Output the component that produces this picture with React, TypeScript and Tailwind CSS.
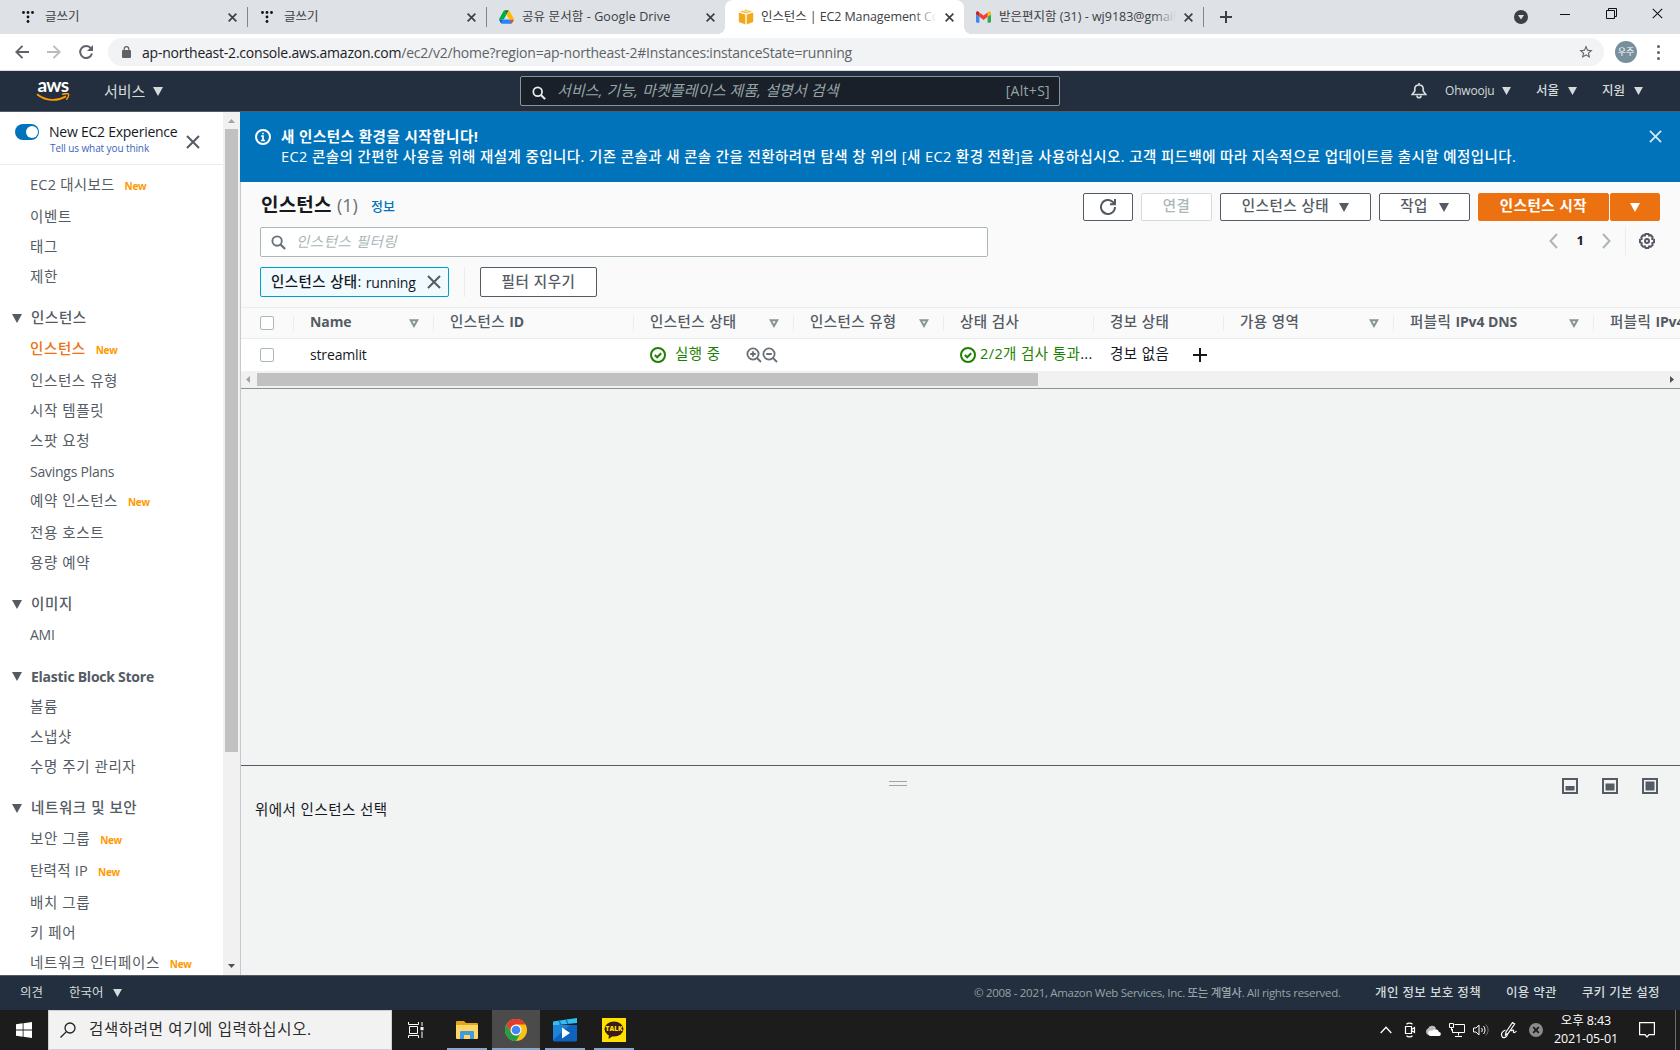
import React from 'react';

const Caret = ({ className = '' }: { className?: string }) => (
  <svg viewBox="0 0 10 9" className={'shrink-0 ' + className} fill="currentColor">
    <path d="M0 0h10L5 9z" />
  </svg>
);

const Cross = ({ className = '', w = 2 }: { className?: string; w?: number }) => (
  <svg viewBox="0 0 14 14" className={'shrink-0 ' + className} fill="none" stroke="currentColor" strokeWidth={w}>
    <path d="M1 1l12 12M13 1L1 13" />
  </svg>
);

const SearchIcon = ({ className = '' }: { className?: string }) => (
  <svg viewBox="0 0 16 16" className={'shrink-0 ' + className} fill="none" stroke="currentColor" strokeWidth="2">
    <circle cx="6.5" cy="6.5" r="5" />
    <path d="M10.2 10.2L15 15" strokeWidth="2.4" />
  </svg>
);

/* ---------- Browser chrome ---------- */

const TistoryIcon = () => (
  <svg viewBox="0 0 12 12" className="h-3 w-3 shrink-0" fill="#111">
    <circle cx="1.5" cy="1.5" r="1.4" />
    <circle cx="6" cy="1.5" r="1.4" />
    <circle cx="10.5" cy="1.5" r="1.4" />
    <circle cx="6" cy="6" r="1.4" />
    <circle cx="6" cy="10.5" r="1.4" />
  </svg>
);

const DriveIcon = () => (
  <svg viewBox="0 0 87.3 78" className="h-[14px] w-[15px] shrink-0">
    <path fill="#0066da" d="m6.6 66.85 3.85 6.65c.8 1.4 1.95 2.5 3.3 3.3l13.75-23.8h-27.5c0 1.55.4 3.1 1.2 4.5z" />
    <path fill="#00ac47" d="m43.65 25-13.75-23.8c-1.35.8-2.5 1.9-3.3 3.3l-25.4 44a9.06 9.06 0 0 0 -1.2 4.5h27.5z" />
    <path fill="#ea4335" d="m73.55 76.8c1.35-.8 2.5-1.9 3.3-3.3l1.6-2.75 7.65-13.25c.8-1.4 1.2-2.95 1.2-4.5h-27.5l5.85 11.5z" />
    <path fill="#00832d" d="m43.65 25 13.75-23.8c-1.35-.8-2.9-1.2-4.5-1.2h-18.5c-1.6 0-3.15.45-4.5 1.2z" />
    <path fill="#2684fc" d="m59.8 53h-32.3l-13.75 23.8c1.35.8 2.9 1.2 4.5 1.2h50.8c1.6 0 3.15-.45 4.5-1.2z" />
    <path fill="#ffba00" d="m73.4 26.5-12.7-22c-.8-1.4-1.95-2.5-3.3-3.3l-13.75 23.8 16.15 28h27.45c0-1.55-.4-3.1-1.2-4.5z" />
  </svg>
);

const CubeIcon = () => (
  <svg viewBox="0 0 16 16" className="h-4 w-4 shrink-0">
    <path fill="#f8bc3c" d="M8 .5l6 2-6 2-6-2z" />
    <path fill="#f2a81d" d="M.8 3.4L7.5 5.4V15.5L.8 13z" />
    <path fill="#f2a81d" d="M15.2 3.4L8.5 5.4V15.5l6.7-2.5z" />
    <path stroke="#fff4dc" strokeWidth=".9" fill="none" d="M8 5v10.5M1 3l7 2.2L15 3M5 1.5l3.2 1 3-1" />
  </svg>
);

const GmailIcon = () => (
  <svg viewBox="52 42 88 66" className="h-[12px] w-[15px] shrink-0">
    <path fill="#4285f4" d="M58 108h14V74L52 59v43c0 3.32 2.69 6 6 6" />
    <path fill="#34a853" d="M120 108h14c3.32 0 6-2.69 6-6V59l-20 15" />
    <path fill="#fbbc04" d="M120 48v26l20-15v-8c0-7.42-8.47-11.65-14.4-7.2" />
    <path fill="#ea4335" d="M72 74V48l24 18 24-18v26L96 92" />
    <path fill="#c5221f" d="M52 51v8l20 15V48l-5.6-4.2c-5.94-4.45-14.4-.22-14.4 7.2" />
  </svg>
);

type TabProps = {
  icon: React.ReactNode;
  title: string;
  width: string;
  text?: string;
  active?: boolean;
  sep?: boolean;
  fade?: boolean;
};

const Tab = ({ icon, title, width, text = '', active, sep, fade }: TabProps) => (
  <div className={'relative flex h-full items-center ' + width + (active ? ' rounded-t-lg bg-white' : '')}>
    <span className="flex w-[23px] shrink-0 items-center">{icon}</span>
    <span className={'relative min-w-0 flex-1 overflow-hidden whitespace-nowrap text-[12.5px] text-[#3c4043] ' + text}>
      {title}
      {fade && (
        <span
          className={
            'absolute inset-y-0 right-0 w-6 bg-gradient-to-r from-transparent ' + (active ? 'to-white' : 'to-[#dee1e6]')
          }
        />
      )}
    </span>
    <Cross className="mr-[10px] ml-2 h-[9px] w-[9px] text-[#3c4043]" w={2.6} />
    {sep && <span className="h-5 w-px bg-[#80868b]" />}
    {active && (
      <>
        <span className="absolute bottom-0 -left-2 h-2 w-2 bg-[radial-gradient(circle_at_0_0,transparent_8px,white_8px)]" />
        <span className="absolute -right-2 bottom-0 h-2 w-2 bg-[radial-gradient(circle_at_100%_0,transparent_8px,white_8px)]" />
      </>
    )}
  </div>
);

const TabStrip = () => (
  <div className="flex h-[34px] bg-[#dee1e6]">
    <Tab icon={<TistoryIcon />} title="글쓰기" width="w-[248px] pl-[22px]" sep />
    <Tab icon={<TistoryIcon />} title="글쓰기" width="w-[239px] pl-[13px]" sep />
    <Tab icon={<DriveIcon />} title="공유 문서함 - Google Drive" width="w-[238px] pl-[12px]" text="tracking-[0.1px]" />
    <Tab
      icon={<CubeIcon />}
      title="인스턴스 | EC2 Management Console"
      width="w-[239px] pl-[13px]"
      text="tracking-[-0.1px]"
      active
      fade
    />
    <Tab icon={<GmailIcon />} title="받은편지함 (31) - wj9183@gmail.com" width="w-[240px] pl-[12px]" sep fade />
    <div className="flex flex-1 items-center pl-[16px]">
      <svg viewBox="0 0 12 12" className="h-3 w-3" stroke="#3c4043" strokeWidth="2">
        <path d="M6 0v12M0 6h12" />
      </svg>
      <svg viewBox="0 0 14 14" className="ml-auto h-[14px] w-[14px]">
        <circle cx="7" cy="7" r="7" fill="#3c4043" />
        <path d="M4 5h6L7 9.5z" fill="#dee1e6" />
      </svg>
      <svg viewBox="0 0 10 10" className="mb-[6px] ml-[32px] h-[10px] w-[10px]" stroke="#111">
        <path d="M0 5.5h10" />
      </svg>
      <svg viewBox="0 0 11 11" className="mb-[7px] ml-[36px] h-[11px] w-[11px]" stroke="#111" fill="none">
        <path d="M.5 2.5h8v8h-8zM2.5 2.5v-2h8v8h-2" />
      </svg>
      <Cross className="mr-[17px] mb-[7px] ml-[35px] h-[11px] w-[11px] text-[#111]" w={1.3} />
    </div>
  </div>
);

const Toolbar = () => (
  <div className="flex h-[37px] items-center border-b border-[#dadce0] bg-white pl-[15px]">
    <svg viewBox="0 0 14 14" className="h-[14px] w-[14px]" fill="none" stroke="#5f6368" strokeWidth="1.9">
      <path d="M14 7H1.5M7.5 .8L1.3 7l6.2 6.2" />
    </svg>
    <svg viewBox="0 0 14 14" className="ml-[18px] h-[14px] w-[14px]" fill="none" stroke="#b9bbbe" strokeWidth="1.9">
      <path d="M0 7h12.5M6.5 .8L12.7 7l-6.2 6.2" />
    </svg>
    <svg viewBox="0 0 14 14" className="ml-[18px] h-[14px] w-[14px]" fill="none" stroke="#5f6368" strokeWidth="2">
      <path d="M12 3.4A6 6 0 1 0 13 8.6" />
      <path d="M14 0v6H8z" fill="#5f6368" stroke="none" />
    </svg>
    <div className="ml-[15px] flex h-7 w-[1496px] items-center rounded-full bg-[#f1f3f4] pl-[14px]">
      <svg viewBox="0 0 9 12" className="h-3 w-[9px]" fill="#5f6368">
        <path d="M1 4h7a1 1 0 0 1 1 1v6a1 1 0 0 1-1 1H1a1 1 0 0 1-1-1V5a1 1 0 0 1 1-1z" />
        <path d="M2.2 5V3a2.3 2.3 0 0 1 4.6 0v2" fill="none" stroke="#5f6368" strokeWidth="1.2" />
      </svg>
      <span className="ml-[11px] text-[14px] tracking-[-0.22px] whitespace-nowrap text-[#5f6368]">
        <span className="text-[#202124]">ap-northeast-2.console.aws.amazon.com</span>
        /ec2/v2/home?region=ap-northeast-2#Instances:instanceState=running
      </span>
      <svg viewBox="0 0 24 24" className="mr-[10px] ml-auto h-4 w-4" fill="#5f6368">
        <path d="M22 9.24l-7.19-.62L12 2 9.19 8.63 2 9.24l5.46 4.73L5.82 21 12 17.27 18.18 21l-1.63-7.03L22 9.24zM12 15.4l-3.76 2.27 1-4.28-3.32-2.88 4.38-.38L12 6.1l1.71 4.04 4.38.38-3.32 2.88 1 4.28L12 15.4z" />
      </svg>
    </div>
    <span className="ml-[11px] flex h-[22px] w-[22px] items-center justify-center rounded-full bg-[#78909c] text-[9px] text-white">
      우주
    </span>
    <span className="ml-5 flex flex-col gap-[3px]">
      <span className="h-[3px] w-[3px] rounded-full bg-[#5f6368]" />
      <span className="h-[3px] w-[3px] rounded-full bg-[#5f6368]" />
      <span className="h-[3px] w-[3px] rounded-full bg-[#5f6368]" />
    </span>
  </div>
);

/* ---------- AWS console header ---------- */

const AwsLogo = () => (
  <div className="relative h-[24px] w-[34px]">
    <span className="block text-center font-[Lato] text-[19px] leading-[11px] font-bold tracking-[-0.6px] text-white">aws</span>
    <svg viewBox="0 0 34 9" className="absolute top-[14px] left-0 h-[9px] w-[34px]" fill="none" stroke="#ff9900">
      <path d="M1 1.2C10 8.2 21 8.6 30 3.4" strokeWidth="1.8" />
      <path d="M26 1.4c3-1 6-.8 6.4-.2.4.7-.4 3.4-2 5.6" strokeWidth="1.5" />
    </svg>
  </div>
);

const AwsNav = () => (
  <header className="flex h-[41px] items-center border-b border-[#545b64] bg-[#232f3e] pl-[36px] text-[#d5dbdb]">
    <AwsLogo />
    <span className="ml-[34px] w-[49px] text-[15px] leading-[20px] whitespace-nowrap">서비스</span>
    <Caret className="h-[9px] w-[10px]" />
    <div className="ml-[357px] flex h-[30px] w-[540px] items-center rounded-[2px] border border-[#879596] bg-[#1a2029] pr-[9px] pl-[11px]">
      <SearchIcon className="mt-[3px] h-[14px] w-[14px] text-[#eaeded]" />
      <span className="mb-px ml-[11px] text-[15px] tracking-[0.1px] whitespace-nowrap text-[#95a5a6] italic">
        서비스, 기능, 마켓플레이스 제품, 설명서 검색
      </span>
      <span className="mb-px ml-auto text-[14px] tracking-[0.3px] text-[#95a5a6]">[Alt+S]</span>
    </div>
    <svg viewBox="0 0 16 16" className="ml-[351px] h-4 w-4" fill="none" stroke="currentColor" strokeWidth="1.7">
      <path d="M1.2 11.5h13.6L12.2 8V5.5C12 3 10.500 2 8 2S4 3 3.800 5.500V8zM8 0v2" />
      <path d="M6 12.500c0 3 4 3 4 0" />
    </svg>
    <span className="ml-[18px] w-[57px] text-[12px] font-medium tracking-[-0.2px]">Ohwooju</span>
    <Caret className="h-2 w-[9px]" />
    <span className="ml-[25px] w-[32px] text-[12.500px] font-medium whitespace-nowrap">서울</span>
    <Caret className="h-2 w-[9px]" />
    <span className="ml-[25px] w-[32px] text-[12.500px] font-medium whitespace-nowrap">지원</span>
    <Caret className="h-2 w-[9px]" />
  </header>
);

/* ---------- Sidebar ---------- */

type NavRow = { label: string; h: string; fresh?: boolean; head?: boolean; active?: boolean; latin?: boolean; mixed?: boolean };

const NAV: NavRow[] = [
  { label: 'EC2 대시보드', h: 'h-[30px]', fresh: true, mixed: true },
  { label: '이벤트', h: 'h-[32px]' },
  { label: '태그', h: 'h-[30px]' },
  { label: '제한', h: 'h-[30px]' },
  { label: '인스턴스', h: 'h-[41px]', head: true },
  { label: '인스턴스', h: 'h-[31px]', active: true, fresh: true },
  { label: '인스턴스 유형', h: 'h-[32px]' },
  { label: '시작 템플릿', h: 'h-[30px]' },
  { label: '스팟 요청', h: 'h-[30px]' },
  { label: 'Savings Plans', h: 'h-[30px]', latin: true },
  { label: '예약 인스턴스', h: 'h-[30px]', fresh: true },
  { label: '전용 호스트', h: 'h-[32px]' },
  { label: '용량 예약', h: 'h-[30px]' },
  { label: '이미지', h: 'h-[41px]', head: true },
  { label: 'AMI', h: 'h-[30px]', latin: true },
  { label: 'Elastic Block Store', h: 'h-[42px]', head: true, latin: true },
  { label: '볼륨', h: 'h-[31px]' },
  { label: '스냅샷', h: 'h-[30px]' },
  { label: '수명 주기 관리자', h: 'h-[30px]' },
  { label: '네트워크 및 보안', h: 'h-[41px]', head: true },
  { label: '보안 그룹', h: 'h-[31px]', fresh: true },
  { label: '탄력적 IP', h: 'h-[32px]', fresh: true, mixed: true },
  { label: '배치 그룹', h: 'h-[32px]' },
  { label: '키 페어', h: 'h-[30px]' },
  { label: '네트워크 인터페이스', h: 'h-[30px]', fresh: true },
];

const Sidebar = () => (
  <aside className="flex w-[240px] shrink-0 bg-white">
    <div className="w-[223px]">
      <div className="flex h-[53px] border-b border-[#eaeded] pl-[15px]">
        <span className="mt-3 flex h-4 w-6 justify-end rounded-full bg-[#0073bb] p-[2px] pr-[1px]">
          <span className="h-3 w-3 rounded-full bg-white" />
        </span>
        <div className="ml-[10px] flex w-[137px] flex-col pt-[11px] whitespace-nowrap">
          <span className="text-[14px] leading-[18px] tracking-[-0.25px] text-[#16191f]">New EC2 Experience</span>
          <span className="mt-[1px] pl-px text-[10px] leading-[13px] tracking-[-0.1px] text-[#3b5fc0]">Tell us what you think</span>
        </div>
        <Cross className="mt-[23px] h-[14px] w-[14px] text-[#545b64]" />
      </div>
      <nav>
        {NAV.map((r, i) => (
          <div key={i} className={'flex items-end whitespace-nowrap ' + r.h + (r.head ? ' pl-[12px]' : ' pl-[30px]')}>
            <div className="flex h-5 items-center">
              {r.head && <Caret className="mr-[9px] h-[9px] w-[10px] text-[#545b64]" />}
              <span
                className={
                  (r.latin
                    ? 'text-[14px] tracking-[-0.25px] '
                    : r.mixed
                      ? 'text-[14.500px] tracking-[0.25px] '
                      : 'text-[14.500px] tracking-[0.6px] ') +
                  (r.active
                    ? 'font-medium text-[#ec7211]'
                    : r.head && r.latin
                      ? 'font-bold text-[#545b64]'
                      : r.head
                        ? 'font-medium text-[#545b64]'
                        : 'text-[#545b64]')
                }
              >
                {r.label}
              </span>
              {r.fresh && <span className="mt-[3px] ml-[10px] text-[10px] font-bold tracking-[-0.3px] text-[#ff9900]">New</span>}
            </div>
          </div>
        ))}
      </nav>
    </div>
    <div className="flex w-[17px] flex-col items-center bg-[#f1f1f1]">
      <svg viewBox="0 0 7 4" className="mt-[7px] mb-[6px] h-1 w-[7px]" fill="#a3a3a3">
        <path d="M3.500 0L7 4H0z" />
      </svg>
      <div className="h-[623px] w-[13px] bg-[#c1c1c1]" />
      <svg viewBox="0 0 7 4" className="mt-auto mb-[7px] h-1 w-[7px]" fill="#505050">
        <path d="M0 0h7L3.500 4z" />
      </svg>
    </div>
  </aside>
);

/* ---------- Main panel ---------- */

const Banner = () => (
  <div className="flex h-[70px] bg-[#0073bb] pl-[15px] text-white">
    <svg viewBox="0 0 16 16" className="mt-[17px] h-4 w-4 shrink-0" fill="none" stroke="currentColor" strokeWidth="2">
      <circle cx="8" cy="8" r="7" />
      <path d="M6.200 7.200H8v4M6 11.500h4M7.200 4.500h1.600" strokeWidth="1.700" />
    </svg>
    <div className="ml-[10px] flex-1 pt-[15px] text-[14.500px] leading-5 font-medium tracking-[0.42px] whitespace-nowrap">
      <div className="font-bold tracking-[0.5px]">새 인스턴스 환경을 시작합니다!</div>
      <div>
        EC2 콘솔의 간편한 사용을 위해 재설계 중입니다. 기존 콘솔과 새 콘솔 간을 전환하려면 탐색 창 위의 [새 EC2 환경 전환]을
        사용하십시오. 고객 피드백에 따라 지속적으로 업데이트를 출시할 예정입니다.
      </div>
    </div>
    <Cross className="mt-[18px] mr-[18px] h-[13px] w-[13px] text-[#d5e6f2]" />
  </div>
);

const BTN =
  'flex h-7 items-center justify-center rounded-[2px] border pb-[2px] whitespace-nowrap text-[14.500px] font-medium tracking-[0.5px] ';

const PanelHeader = () => (
  <div className="flex h-[126px] flex-col border-b border-[#eaeded] bg-[#fafafa] pt-[11px] pr-5 pl-[19px]">
    <div className="flex h-[28px] items-center">
      <span className="w-[77px] pb-[4px] pl-px text-[19px] font-bold tracking-[0.2px] whitespace-nowrap text-[#16191f]">
        인스턴스
      </span>
      <span className="w-[34px] pb-[4px] text-[18px] text-[#687078]">(1)</span>
      <span className="text-[13px] font-medium text-[#0073bb]">정보</span>
      <div className="ml-auto flex gap-2">
        <span className={BTN + 'w-[50px] border-[#545b64] bg-white text-[#545b64]'}>
          <svg viewBox="0 0 16 16" className="mt-[2px] h-4 w-4" fill="none" stroke="currentColor" strokeWidth="2">
            <path d="M15 8a7 7 0 1 1-2.200-5.100L15 5M15 0v5.200h-5" />
          </svg>
        </span>
        <span className={BTN + 'w-[71px] border-[#d5dbdb] bg-white text-[#aab7b8]'}>연결</span>
        <span className={BTN + 'w-[151px] gap-[10px] border-[#545b64] bg-white text-[#545b64]'}>
          인스턴스 상태
          <Caret className="mt-[2px] h-[9px] w-[10px]" />
        </span>
        <span className={BTN + 'w-[91px] gap-[11px] border-[#545b64] bg-white text-[#545b64]'}>
          작업
          <Caret className="mt-[2px] h-[9px] w-[10px]" />
        </span>
        <div className="flex gap-px">
          <span className={BTN + 'w-[131px] border-[#ec7211] bg-[#ec7211] text-white'}>
            <b>인스턴스 시작</b>
          </span>
          <span className={BTN + 'w-[50px] border-[#ec7211] bg-[#ec7211] text-white'}>
            <Caret className="mt-[2px] h-[9px] w-[10px]" />
          </span>
        </div>
      </div>
    </div>
    <div className="mt-[6px] flex h-[30px]">
      <div className="flex w-[728px] items-center rounded-[2px] border border-[#aab7b8] bg-white pl-[10px]">
        <SearchIcon className="h-[15px] w-[15px] text-[#687078]" />
        <span className="mb-px ml-[10px] text-[14.500px] tracking-[0.5px] text-[#aab7b8] italic">인스턴스 필터링</span>
      </div>
      <div className="ml-auto flex h-7 items-center">
        <svg viewBox="0 0 9 16" className="h-4 w-[9px]" fill="none" stroke="#aab7b8" strokeWidth="2">
          <path d="M8 1L1.500 8 8 15" />
        </svg>
        <span className="mr-[18px] ml-[19px] text-[13px] font-bold text-[#16191f]">1</span>
        <svg viewBox="0 0 9 16" className="h-4 w-[9px]" fill="none" stroke="#aab7b8" strokeWidth="2">
          <path d="M1 1l6.500 7L1 15" />
        </svg>
        <span className="mr-[13px] ml-[14px] h-7 w-px bg-[#eaeded]" />
        <svg viewBox="0 0 16 16" className="mr-[5px] h-4 w-4" fill="none" stroke="#545b64" strokeWidth="2">
          <path d="M6.500 1h3l.6 1.500 1.700-.3 1.800 1.900-.4 1.700L15 6.600v2.800l-1.700.8.3 1.700-1.800 1.800-1.700-.3-.8 1.600H6.700l-.8-1.600-1.700.3-1.800-1.800.3-1.700L1 9.400V6.600l1.700-.8-.3-1.700 1.800-1.900 1.700.3z" />
          <circle cx="8" cy="8" r="2" />
        </svg>
      </div>
    </div>
    <div className="mt-[10px] flex h-[30px]">
      <div className="flex w-[189px] items-center rounded-[2px] border border-[#00a1c9] bg-[#f1faff] pl-[10px] whitespace-nowrap text-[#16191f]">
        <span className="text-[14.500px] font-medium tracking-[0.4px]">인스턴스 상태:</span>
        <span className="ml-1 text-[14px] tracking-[-0.2px]">running</span>
        <Cross className="mr-[7px] ml-auto h-[14px] w-[14px] text-[#545b64]" />
      </div>
      <span className="mr-[15px] ml-[15px] w-px bg-[#eaeded]" />
      <span
        className={
          'flex h-[30px] w-[117px] items-center justify-center rounded-[2px] border border-[#545b64] bg-white pb-px text-[14.500px] font-medium tracking-[0.6px] text-[#545b64]'
        }
      >
        필터 지우기
      </span>
    </div>
  </div>
);

const COLS: { label: string; w: string; sort?: boolean; latin?: string; tail?: string }[] = [
  { label: '', latin: 'Name', w: 'w-[140px]', sort: true },
  { label: '인스턴스 ', latin: 'ID', w: 'w-[200px]' },
  { label: '인스턴스 상태', w: 'w-[160px]', sort: true },
  { label: '인스턴스 유형', w: 'w-[150px]', sort: true },
  { label: '상태 검사', w: 'w-[150px]' },
  { label: '경보 상태', w: 'w-[130px]' },
  { label: '가용 영역', w: 'w-[170px]', sort: true },
  { label: '퍼블릭 ', latin: 'IPv4 DNS', w: 'w-[200px]', sort: true },
  { label: '퍼블릭 ', latin: 'IPv4', tail: ' 주소', w: 'w-[200px]' },
];

const OkIcon = () => (
  <svg viewBox="0 0 16 16" className="h-4 w-4 shrink-0" fill="none" stroke="#1d8102" strokeWidth="2">
    <circle cx="8" cy="8" r="7" />
    <path d="M4.800 8l2.400 2.300 4-4" />
  </svg>
);

const Magnifier = ({ plus }: { plus?: boolean }) => (
  <svg viewBox="0 0 16 16" className="h-4 w-4 shrink-0" fill="none" stroke="#687078" strokeWidth="1.800">
    <circle cx="7" cy="7" r="5.600" />
    <path d="M11 11l4 4M4.200 7h5.600" />
    {plus && <path d="M7 4.200v5.600" />}
  </svg>
);

const Checkbox = () => <span className="ml-[19px] h-[14px] w-[14px] rounded-[2px] border border-[#aab7b8] bg-white" />;

const Table = () => (
  <div className="border-b border-[#879596] bg-white">
    <div className="flex h-[31px] items-center overflow-hidden border-b border-[#eaeded] bg-[#fafafa]">
      <div className="flex w-[52px] shrink-0">
        <Checkbox />
      </div>
      {COLS.map((c, i) => (
        <div
          key={i}
          className={'flex h-[15px] shrink-0 items-center border-l border-[#eaeded] pr-[14px] pl-4 whitespace-nowrap text-[#545b64] ' + c.w}
        >
          <span className="mb-[2px] text-[14.500px] font-medium tracking-[0.4px]">
            {c.label}
            {c.latin && <b className="text-[14px] tracking-[-0.1px]">{c.latin}</b>}
            {c.tail}
          </span>
          {c.sort && (
            <svg viewBox="0 0 10 9" className="ml-auto h-[9px] w-[10px]" fill="none" stroke="#879596" strokeWidth="2">
              <path d="M1.700 1.200h6.600L5 7z" />
            </svg>
          )}
        </div>
      ))}
    </div>
    <div className="flex h-[32px] items-center text-[14.500px] tracking-[0.4px] whitespace-nowrap text-[#16191f]">
      <div className="flex w-[52px]">
        <Checkbox />
      </div>
      <div className="w-[340px] pb-[2px] pl-[17px] text-[14px] tracking-[-0.15px]">streamlit</div>
      <div className="flex w-[310px] items-center pl-[17px]">
        <OkIcon />
        <span className="mb-[2px] ml-[9px] w-[71px] text-[#1d8102]">실행 중</span>
        <Magnifier plus />
        <Magnifier />
      </div>
      <div className="flex w-[150px] items-center pl-[17px]">
        <OkIcon />
        <span className="mb-[2px] ml-1 text-[#1d8102]">
          2/2개 검사 통과<span className="text-[#16191f]">...</span>
        </span>
      </div>
      <div className="flex items-center pl-[17px]">
        <span className="mb-[2px] w-[83px]">경보 없음</span>
        <svg viewBox="0 0 14 14" className="h-[14px] w-[14px]" stroke="#16191f" strokeWidth="2">
          <path d="M7 0v14M0 7h14" />
        </svg>
      </div>
    </div>
    <div className="flex h-[17px] items-center bg-[#f1f1f1]">
      <svg viewBox="0 0 4 7" className="mr-[7px] ml-[5px] h-[7px] w-1" fill="#a3a3a3">
        <path d="M4 0v7L0 3.500z" />
      </svg>
      <div className="h-[13px] w-[781px] bg-[#c1c1c1]" />
      <svg viewBox="0 0 4 7" className="mr-[6px] ml-auto h-[7px] w-1" fill="#505050">
        <path d="M0 0v7l4-3.500z" />
      </svg>
    </div>
  </div>
);

const PaneIcon = ({ d }: { d: string }) => (
  <svg viewBox="0 0 16 16" className="h-4 w-4" fill="none" stroke="#545b64" strokeWidth="2">
    <path d="M1 1h14v14H1z" />
    <path d={d} fill="#545b64" stroke="none" />
  </svg>
);

const DetailPane = () => (
  <div className="flex flex-1 flex-col border-t border-[#545b64]">
    <div className="flex h-[32px] items-start pt-3">
      <div className="mt-[3px] ml-[648px] h-[5px] w-[18px] border-y border-[#a0a4a6]" />
      <div className="mr-[22px] ml-auto flex gap-6">
        <PaneIcon d="M3.500 8h9v4.500h-9z" />
        <PaneIcon d="M3.500 5.500h9v7h-9z" />
        <PaneIcon d="M3.500 3.500h9v9h-9z" />
      </div>
    </div>
    <span className="mt-[2px] ml-[14px] text-[14.500px] leading-5 tracking-[0.45px] text-[#16191f]">위에서 인스턴스 선택</span>
  </div>
);

const Footer = () => (
  <footer className="flex h-[35px] items-center border-t border-[#545b64] bg-[#232f3e] pr-5 pl-5 text-[12.500px] whitespace-nowrap text-[#d5dbdb]">
    <span className="w-[49px]">의견</span>
    <span className="w-[44px]">한국어</span>
    <Caret className="h-2 w-[9px]" />
    <span className="ml-auto w-[401px] text-[11.500px] font-medium tracking-[-0.3px] text-[#95a5a6]">
      © 2008 - 2021, Amazon Web Services, Inc. 또는 계열사. All rights reserved.
    </span>
    <span className="w-[131px] font-medium tracking-[0.4px]">개인 정보 보호 정책</span>
    <span className="w-[76px] font-medium tracking-[0.3px]">이용 약관</span>
    <span className="w-[78px] font-medium tracking-[0.3px]">쿠키 기본 설정</span>
  </footer>
);

/* ---------- Taskbar ---------- */

const TaskApp = ({ children, className }: { children: React.ReactNode; className: string }) => (
  <div className={'flex h-10 items-center justify-center border-b-2 border-[#8ba5cc] pt-[2px] ' + className}>{children}</div>
);

const Taskbar = () => (
  <div className="flex h-10 items-center bg-[#1c1c1c]">
    <svg viewBox="0 0 16 16" className="mx-4 h-4 w-4" fill="#fff">
      <path d="M0 2.200L6.700 1.300V7.600H0zM7.500 1.200L16 0V7.600H7.500zM0 8.400h6.700v6.300L0 13.800zM7.500 8.400H16V16l-8.500-1.200z" />
    </svg>
    <div className="flex h-10 w-[344px] items-center border border-[#cfcfcf] bg-[#f2f2f2] pl-[11px]">
      <svg viewBox="0 0 16 16" className="h-4 w-4" fill="none" stroke="#222" strokeWidth="1.300">
        <circle cx="10" cy="6" r="5" />
        <path d="M6.400 9.600L.5 15.500" />
      </svg>
      <span className="ml-[13px] text-[15.500px] tracking-[0.65px] whitespace-nowrap text-[#2b2b2b]">검색하려면 여기에 입력하십시오.</span>
    </div>
    <svg viewBox="0 0 16 16" className="ml-4 h-4 w-4" fill="none" stroke="#fff">
      <path d="M.5 0v2.500h10V0M.5 16v-2.500h10V16M1.500 4.500h8v7h-8zM14 0v4M14 9.500V16" />
      <path d="M12.500 5h3v3.200h-3z" fill="#fff" stroke="none" />
    </svg>
    <TaskApp className="ml-[23px] w-10">
      <svg viewBox="0 0 22 18" className="h-[18px] w-[22px]">
        <path d="M0 1a1 1 0 0 1 1-1h7l2 2h11a1 1 0 0 1 1 1v14H0z" fill="#e8a317" />
        <path d="M0 4h22v13a1 1 0 0 1-1 1H1a1 1 0 0 1-1-1z" fill="#ffd567" />
        <path d="M4 18v-7a1 1 0 0 1 1-1h12a1 1 0 0 1 1 1v7h-4v-4H8v4z" fill="#3d9be0" />
      </svg>
    </TaskApp>
    <TaskApp className="ml-[5px] w-12 bg-[#4b4b4b]">
      <svg viewBox="0 0 48 48" className="h-[22px] w-[22px]">
        <circle cx="24" cy="24" r="24" fill="#fbc116" />
        <path d="M3.200 12A24 24 0 0 1 44.800 12H24L13.600 30z" fill="#e33b2e" />
        <path d="M3.200 12A24 24 0 0 0 24 48L34.400 30H24L13.600 30z" fill="#2a9b47" />
        <circle cx="24" cy="24" r="12" fill="#fff" />
        <circle cx="24" cy="24" r="9.500" fill="#4285f4" />
      </svg>
    </TaskApp>
    <TaskApp className="ml-[5px] w-10">
      <svg viewBox="0 0 24 24" className="h-6 w-6">
        <path d="M0 3.500L24 0v5L0 7.500z" fill="#35bdf0" />
        <path d="M6 2.500l2 4.500M13 1.500l2 4.500" stroke="#0f78c8" strokeWidth="1.500" />
        <path d="M0 7h24v15a1.500 1.500 0 0 1-1.500 1.500h-21A1.500 1.500 0 0 1 0 22z" fill="#0f62bd" />
        <path d="M0 7h17L0 22z" fill="#1d84d8" />
        <path d="M9 9.500l8 5.500-8 5.500z" fill="#fff" />
      </svg>
    </TaskApp>
    <TaskApp className="ml-[9px] w-10">
      <span className="relative flex h-6 w-6 items-center justify-center bg-[#ffe100]">
        <svg viewBox="0 0 24 24" className="absolute inset-0 h-6 w-6" fill="#391b1b">
          <ellipse cx="12" cy="11" rx="9.500" ry="7.500" />
          <path d="M7 16l-.5 5 5-3.500z" />
        </svg>
        <span className="relative mb-[2px] text-[6.500px] leading-none font-black text-[#ffe100]">TALK</span>
      </span>
    </TaskApp>
    <div className="ml-auto flex items-center text-white">
      <svg viewBox="0 0 12 8" className="h-[8px] w-3" fill="none" stroke="currentColor" strokeWidth="1.300">
        <path d="M.7 7L6 1.300 11.300 7" />
      </svg>
      <svg viewBox="0 0 12 16" className="ml-[12px] h-4 w-3" fill="none" stroke="currentColor" strokeWidth="1.200">
        <path d="M1.500 4.500h6v7h-6zM7.500 7.500l3-2v5l-3-2M2.500 2.200C4 .8 7 .8 8.500 2.200M2.500 13.800c1.500 1.400 4.500 1.400 6 0" />
      </svg>
      <svg viewBox="0 0 16 11" className="ml-[9px] h-[11px] w-4">
        <path d="M3.500 10A3.500 3.500 0 0 1 3 3.500 4.500 4.500 0 0 1 11 3l-4 7z" fill="#bdbdbd" />
        <path d="M5 11a3 3 0 0 1 0-5.500c1 0 1.600.3 2 .6A3.800 3.800 0 0 1 14 7a2 2 0 0 1-.4 4z" fill="#fff" />
      </svg>
      <svg viewBox="0 0 16 16" className="ml-2 h-4 w-4" fill="none" stroke="currentColor">
        <path d="M5.500 2.500h10v8h-12V7M9.500 10.500v3M6 14.500h7M.5 1.500h4v4h-4zM2.500 5.500v3" />
      </svg>
      <svg viewBox="0 0 16 14" className="ml-2 h-[14px] w-4" fill="none" stroke="currentColor">
        <path d="M.5 5h2.500l3-3v10L3 9H.5zM8.500 5c1 1 1 3 0 4M10.500 3c2 2 2 6 0 8" />
        <path d="M12.800 1.500c3 3 3 8 0 11" stroke="#777" />
      </svg>
      <svg viewBox="0 0 18 18" className="ml-[11px] h-[18px] w-[18px]" fill="none" stroke="currentColor" strokeWidth="1.200">
        <path d="M6 11L12.500 1.500l2.200 1.500L8 12.500 5.500 14zM5.500 9C2 10 .8 13 2 15.500s5 .5 5.500-2M11 10c1.500-1.500 3-1 2.500.5s1.500 1.500 3-.5" />
      </svg>
      <svg viewBox="0 0 14 14" className="ml-[11px] h-[14px] w-[14px]">
        <circle cx="7" cy="7" r="7" fill="#8b8b8b" />
        <path d="M4.200 4.200l5.600 5.600M9.800 4.200L4.200 9.800" stroke="#1c1c1c" strokeWidth="1.800" />
      </svg>
      <div className="ml-[9px] flex w-[68px] flex-col items-center text-[12.500px] leading-[18px] tracking-[-0.1px] whitespace-nowrap">
        <span>오후 8:43</span>
        <span>2021-05-01</span>
      </div>
      <svg viewBox="0 0 16 16" className="ml-[19px] h-4 w-4" fill="none" stroke="currentColor" strokeWidth="1.200">
        <path d="M.6 .6h14.800v12H10L8 15l-2-2.400H.6z" />
      </svg>
      <span className="mr-1 ml-5 h-10 w-px bg-[#6b6b6b]" />
    </div>
  </div>
);

export default function App() {
  return (
    <div className="flex h-[1050px] w-[1680px] flex-col overflow-hidden bg-[#f2f3f3] font-['Open_Sans','Noto_Sans_CJK_KR',sans-serif]">
      <TabStrip />
      <Toolbar />
      <AwsNav />
      <div className="flex h-[863px] overflow-hidden">
        <Sidebar />
        <main className="flex min-w-0 flex-1 flex-col">
          <Banner />
          <div className="flex min-h-0 flex-1 flex-col border-l border-[#c4cacf]">
            <PanelHeader />
            <Table />
            <div className="h-[376px]" />
            <DetailPane />
          </div>
        </main>
      </div>
      <Footer />
      <Taskbar />
    </div>
  );
}
